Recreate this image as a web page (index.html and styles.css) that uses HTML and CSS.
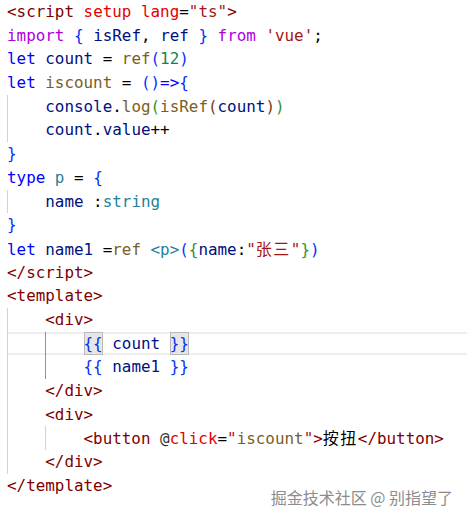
FILE: index.html
```html
<!DOCTYPE html>
<html lang="zh">
<head>
<meta charset="utf-8">
<link rel="stylesheet" href="styles.css">
</head>
<body>
<div class="editor">
<div class="ln"><span class="tg">&lt;script</span> <span class="at">setup</span> <span class="at">lang</span>=<span class="st">"ts"</span><span class="tg">&gt;</span></div>
<div class="ln"><span class="kw">import</span> <span class="b1">{</span> <span class="vr">isRef</span>, <span class="vr">ref</span> <span class="b1">}</span> <span class="kw">from</span> <span class="st">'vue'</span>;</div>
<div class="ln"><span class="kb">let</span> <span class="vr">count</span> = <span class="fn">ref</span><span class="b1">(</span><span class="nm">12</span><span class="b1">)</span></div>
<div class="ln"><span class="kb">let</span> <span class="fn">iscount</span> = <span class="b1">()</span><span class="kb">=&gt;</span><span class="b1">{</span></div>
<div class="ln"><span class="ig"></span><span class="vr">console</span>.<span class="fn">log</span><span class="b2">(</span><span class="fn">isRef</span><span class="b3">(</span><span class="vr">count</span><span class="b3">)</span><span class="b2">)</span></div>
<div class="ln"><span class="ig"></span><span class="vr">count</span>.<span class="vr">value</span>++</div>
<div class="ln"><span class="b1">}</span></div>
<div class="ln"><span class="kb">type</span> <span class="ty">p</span> = <span class="b1">{</span></div>
<div class="ln"><span class="ig"></span><span class="vr">name</span> :<span class="ty">string</span></div>
<div class="ln"><span class="b1">}</span></div>
<div class="ln"><span class="kb">let</span> <span class="vr">name1</span> =<span class="fn">ref</span> <span class="ty">&lt;p&gt;</span><span class="b1">(</span><span class="b2">{</span><span class="vr">name</span>:<span class="st">"<span class="cjk">张三</span>"</span><span class="b2">}</span><span class="b1">)</span></div>
<div class="ln"><span class="tg">&lt;/script&gt;</span></div>
<div class="ln"><span class="tg">&lt;template&gt;</span></div>
<div class="ln"><span class="ig"></span><span class="tg">&lt;div&gt;</span></div>
<div class="ln cur"><span class="ig"></span><span class="ig act"></span><span class="mb">{{</span> <span class="vr">count</span> <span class="mb">}}</span></div>
<div class="ln"><span class="ig"></span><span class="ig act"></span><span class="mu">{{</span> <span class="vr">name1</span> <span class="mu">}}</span></div>
<div class="ln"><span class="ig"></span><span class="tg">&lt;/div&gt;</span></div>
<div class="ln"><span class="ig"></span><span class="tg">&lt;div&gt;</span></div>
<div class="ln"><span class="ig"></span><span class="ig"></span><span class="tg">&lt;button</span> <span class="pl">@</span><span class="at">click</span>=<span class="st">"<span class="fn">iscount</span>"</span><span class="tg">&gt;</span><span class="cjk tx">按扭</span><span class="tg">&lt;/button&gt;</span></div>
<div class="ln"><span class="ig"></span><span class="tg">&lt;/div&gt;</span></div>
<div class="ln"><span class="tg">&lt;/template&gt;</span></div>
</div>
<div class="wm">掘金技术社区 @ 别指望了</div>
</body>
</html>
```
FILE: styles.css
```css
html, body {
  margin: 0;
  padding: 0;
  background: #ffffff;
}
body {
  position: relative;
  width: 467px;
  height: 518px;
  overflow: hidden;
}
.editor {
  padding: 0 0 0 7px;
  font-family: "DejaVu Sans Mono", "Liberation Mono", monospace;
  font-size: 15.9px;
  line-height: 23.7px;
  color: #000000;
}
.ln {
  height: 23.7px;
  white-space: pre;
}
.ig {
  display: inline-block;
  width: 4ch;
  height: 23.7px;
  vertical-align: top;
  box-shadow: inset 1px 0 0 #d3d3d3;
}
.ig.act {
  box-shadow: inset 1px 0 0 #939393;
}
.cur {
  box-shadow: inset 0 2px 0 #eeeeee, inset 0 -2px 0 #eeeeee;
}
.tg { color: #800000; }
.at { color: #e50000; }
.st { color: #a31515; }
.kw { color: #af00db; }
.kb { color: #0000ff; }
.vr { color: #001080; }
.fn { color: #795e26; }
.nm { color: #098658; }
.ty { color: #267f99; }
.b1 { color: #0431fa; }
.b2 { color: #319331; }
.b3 { color: #7b3814; }
.pl { color: #333333; }
.tx { color: #000000; }
.mu { color: #0431fa; }
.mb {
  color: #0431fa;
  background: #e6e6e6;
  box-shadow: inset 0 0 0 1px #b9b9b9;
  padding: 2px 0;
}
.cjk {
  font-family: "Noto Sans CJK SC", sans-serif;
  font-size: 16px;
  letter-spacing: 1.5px;
}
.wm {
  position: absolute;
  right: 14px;
  bottom: 11px;
  font-family: "Noto Sans CJK SC", sans-serif;
  font-size: 16px;
  line-height: 20px;
  color: #8c8c8c;
  text-shadow: 0 0 1px #ffffff, 0 0 2px #ffffff;
}
```
